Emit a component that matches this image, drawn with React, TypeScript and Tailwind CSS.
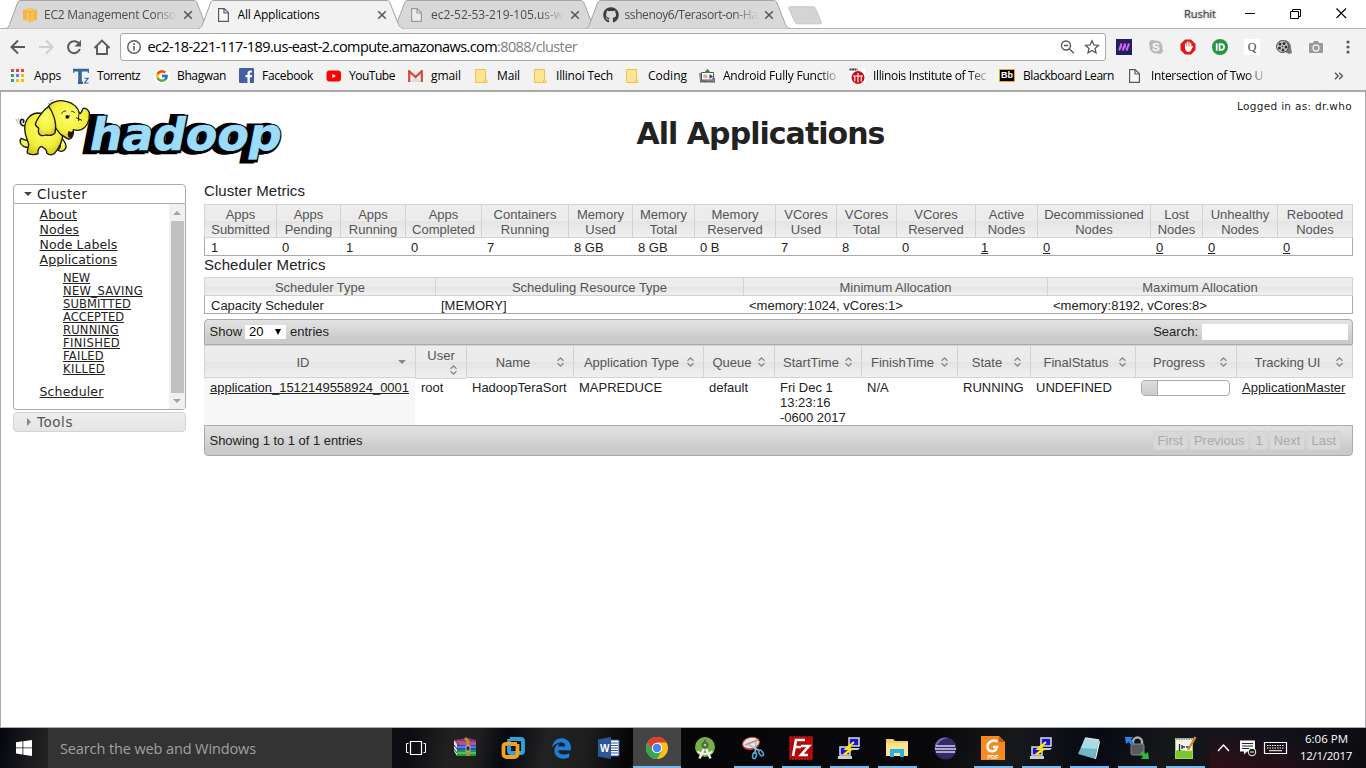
import { useLayoutEffect, useRef, useState } from "react";
import type { ReactNode } from "react";
import { FaGithub, FaSkype } from "react-icons/fa";
import { FaEdgeLegacy } from "react-icons/fa6";
import { FcGoogle } from "react-icons/fc";

/* One line of text whose letter spacing is adjusted so that it takes w pixels. */
function Fit({ w, children, className = "" }: { w: number; children: string; className?: string }) {
  const ref = useRef<HTMLSpanElement>(null);
  const [spacing, setSpacing] = useState(0);
  useLayoutEffect(() => {
    if (ref.current) {
      setSpacing((w - ref.current.getBoundingClientRect().width) / children.length);
    }
  }, [w, children]);
  return (
    <span ref={ref} className={`inline-block whitespace-pre shrink-0 ${className}`} style={{ letterSpacing: spacing }}>
      {children}
    </span>
  );
}

/* ---------- small icons ---------- */
const PageIcon = ({ color = "#5a5a5a" }: { color?: string }) => (
  <svg width="16" height="16" viewBox="0 0 16 16" fill="#fff" fillOpacity=".5" stroke={color} strokeWidth="1.2">
    <path d="M2.6 1.6h5.6l4.2 4.2v8.6H2.6z" />
    <path d="M8 1.6v4.4h4.4" fill="none" />
  </svg>
);
const Cube = () => (
  <svg width="16" height="16" viewBox="0 0 16 16">
    <path d="M1 3l5-1v12l-5-1.500z" fill="#f5b44a" />
    <path d="M15 3l-5-1v12l5-1.500z" fill="#f5b44a" />
    <path d="M4.500 1.600L8 .8l3.500.8V14.500L8 15.400l-3.500-.9z" fill="#f9c35e" />
    <path d="M4.500 4.500L8 5.200l3.500-.7M8 5v10" stroke="#e0a038" strokeWidth=".7" fill="none" />
  </svg>
);
const CloseX = () => (
  <svg width="10" height="10" viewBox="0 0 10 10" stroke="#5a5a5a" strokeWidth="1.6">
    <path d="M1.200 1.200l7.600 7.600M8.800 1.200L1.200 8.800" />
  </svg>
);
const AppsGrid = () => (
  <svg width="14" height="14" viewBox="0 0 14 14">
    {["#ea4335", "#ea4335", "#ea4335", "#34a853", "#4285f4", "#fbbc05", "#34a853", "#fbbc05", "#fbbc05"].map((c, i) => (
      <rect key={i} x={(i % 3) * 5} y={Math.floor(i / 3) * 5} width="3" height="3" fill={c} />
    ))}
  </svg>
);
const TorrentzIcon = () => (
  <svg width="16" height="16" viewBox="0 0 16 16" fill="none" stroke="#336699">
    <path d="M0 2.200h16M5 14.800h5" strokeWidth="2.800" />
    <path d="M.7 2v3M15.300 2v3" strokeWidth="1" />
    <path d="M7 1v14" strokeWidth="3.600" />
    <path d="M11.500 10.200h3.800l-3.800 4.800h4" strokeWidth="1.100" />
  </svg>
);
const GoogleTile = () => (
  <span className="flex size-4 items-center justify-center rounded-full bg-white">
    <FcGoogle size={14} />
  </span>
);
const FacebookTile = () => (
  <svg width="15" height="15" viewBox="0 0 15 15">
    <rect width="15" height="15" rx="1" fill="#4460a0" />
    <path d="M8.500 15V9.300H6.500V7H8.500V5.400C8.500 3.300 9.700 2.400 11.400 2.400c.8 0 1.400.05 1.600.1v2h-1.100c-.9 0-1.100.45-1.100 1.100V7h2.200l-.3 2.300h-1.900V15z" fill="#fff" />
  </svg>
);
const YoutubeTile = () => (
  <svg width="16" height="16" viewBox="0 0 16 16">
    <rect x=".5" y="2.500" width="14.500" height="11" rx="3" fill="#f00" />
    <path d="M6.300 5.800v4.400L10 8z" fill="#fff" />
  </svg>
);
const GmailTile = () => (
  <svg width="15" height="12" viewBox="0 0 15 12">
    <rect width="15" height="12" rx="1" fill="#f1f1f1" />
    <path d="M2 12L7.500 6.500 13 12" fill="#dcdcdc" />
    <path d="M1.200 12V1.200L7.500 7l6.300-5.800V12" fill="none" stroke="#d6473a" strokeWidth="2.200" />
  </svg>
);
const Folder = () => (
  <svg width="13" height="14" viewBox="0 0 13 14">
    <path d="M.5.5h10v10l1.500 1v2H.5z" fill="#ffe593" stroke="#edc34d" />
    <path d="M9.500 13.500v-2.500h2" fill="none" stroke="#edc34d" />
  </svg>
);
const AndroidTile = () => (
  <svg width="16" height="14" viewBox="0 0 16 14">
    <path d="M0 4h3v7h3v2H1z" fill="#8a8a8a" />
    <path d="M2.500 3.500h12V11h-12z" fill="#fff" stroke="#555" />
    <path d="M6 2.500L8.500 0 11 2.500v1.500H6z" fill="#3d8048" />
    <rect x="4.500" y="5.500" width="4" height="3.500" fill="#e8a0a0" />
    <path d="M10.500 5l3.500 2.500-3.500 2.500z" fill="#2d3c78" />
    <path d="M1 12.500h15" stroke="#666" strokeWidth="2" />
    <path d="M13 9.500h2.500v4" stroke="#777" strokeWidth="1.500" fill="none" />
  </svg>
);
const IitTile = () => (
  <svg width="16" height="16" viewBox="0 0 16 16">
    <rect width="16" height="16" fill="#fff" />
    <circle cx="9" cy="9.500" r="6.500" fill="#c60c12" />
    <path d="M.5 1.500h8" stroke="#333" strokeWidth="1.800" strokeDasharray="2 .5" />
    <path d="M5.800 13.500V8M9 14.500V5M12.200 13.500V8M4 8h10" stroke="#fff" strokeWidth="1.100" />
  </svg>
);
const BbTile = () => (
  <span className="flex h-[13px] w-4 items-center justify-center border border-[#e8a912] bg-black font-['Liberation_Sans'] text-[9px] font-bold leading-none text-white">
    Bb
  </span>
);

/* ---------- browser chrome ---------- */
type TabInfo = { icon: ReactNode; title: string; w: number; active?: boolean };
const tabs: TabInfo[] = [
  { icon: <Cube />, title: "EC2 Management Conso", w: 132 },
  { icon: <PageIcon />, title: "All Applications", w: 82, active: true },
  { icon: <PageIcon color="#9a9a9a" />, title: "ec2-52-53-219-105.us-w", w: 132 },
  { icon: <FaGithub size={16} color="#3c3c3c" />, title: "sshenoy6/Terasort-on-Ha", w: 133 },
];

function Tab({ icon, title, w, active }: TabInfo) {
  return (
    <div className={`relative -ml-[10.5px] h-[29px] w-[204px] shrink-0 ${active ? "z-10" : ""}`}>
      <svg className="absolute inset-0" width="204" height="29" viewBox="0 0 204 29">
        <path
          d="M0 28.500C2 28 2.500 27 3.500 24.500L11.500 3C12.300 1 13 .5 15 .5H187C189 .5 190.200 1 191 3L199.500 24.500C200.500 27 202 28 204 28.500"
          fill={active ? "#f2f2f2" : "#d8d8d8"}
          stroke="#a3a3a3"
        />
        {active && <path d="M1 28.500h202" stroke="#f2f2f2" strokeWidth="1.400" />}
      </svg>
      <div className="relative flex h-[29px] items-center pl-[16.500px]">
        <span className="flex w-[22px] shrink-0">{icon}</span>
        <div className={`w-[136px] overflow-hidden text-[12px] leading-4 ${active ? "text-black" : "text-[#4c4c4c] [mask-image:linear-gradient(to_right,black_80%,transparent_98%)]"}`}>
          <Fit w={w}>{title}</Fit>
        </div>
        <span className="ml-[3px]">
          <CloseX />
        </span>
      </div>
    </div>
  );
}

type Mark = { icon: ReactNode; text: string; tw: number; w: string; off: string; fade?: boolean };
const marks: Mark[] = [
  { icon: <AppsGrid />, text: "Apps", tw: 27, w: "w-[62px]", off: "w-[23px]" },
  { icon: <TorrentzIcon />, text: "Torrentz", tw: 43, w: "w-[81px]", off: "w-6" },
  { icon: <GoogleTile />, text: "Bhagwan", tw: 49, w: "w-[85px]", off: "w-[23px]" },
  { icon: <FacebookTile />, text: "Facebook", tw: 51, w: "w-[87px]", off: "w-[23px]" },
  { icon: <YoutubeTile />, text: "YouTube", tw: 46, w: "w-[82px]", off: "w-[23px]" },
  { icon: <GmailTile />, text: "gmail", tw: 30, w: "w-[67px]", off: "w-[23px]" },
  { icon: <Folder />, text: "Mail", tw: 23, w: "w-[59px]", off: "w-[22px]" },
  { icon: <Folder />, text: "Illinoi Tech", tw: 57, w: "w-[92px]", off: "w-[22px]" },
  { icon: <Folder />, text: "Coding", tw: 39, w: "w-[73px]", off: "w-[22px]" },
  { icon: <AndroidTile />, text: "Android Fully Functio", tw: 113, w: "w-[150px]", off: "w-6", fade: true },
  { icon: <IitTile />, text: "Illinois Institute of Tec", tw: 113, w: "w-[150px]", off: "w-6", fade: true },
  { icon: <BbTile />, text: "Blackboard Learn", tw: 91, w: "w-[128px]", off: "w-6" },
  { icon: <PageIcon />, text: "Intersection of Two U", tw: 112, w: "w-[207px]", off: "w-6", fade: true },
];

function BookmarkItem({ icon, text, tw, w, off, fade }: Mark) {
  return (
    <div className={`flex shrink-0 items-center ${w}`}>
      <span className={`flex shrink-0 ${off}`}>{icon}</span>
      <Fit w={tw} className={`text-[12px] leading-4 text-black ${fade ? "[mask-image:linear-gradient(to_right,black_85%,transparent_105%)]" : ""}`}>
        {text}
      </Fit>
    </div>
  );
}

function Chrome() {
  return (
    <header className="h-[91px] bg-white font-['Open_Sans','Noto_Sans',sans-serif]">
      <div className="flex h-[29px] items-start border-b border-[#b4b4b4]">
        <div className="-mb-px flex h-[29px] w-[790px] shrink-0 pl-4">
          {tabs.map((t) => (
            <Tab key={t.title} {...t} />
          ))}
        </div>
        <svg className="mt-[6px] -ml-[3px] shrink-0" width="37" height="19" viewBox="0 0 37 19">
          <path d="M3.500.8h22c2 0 2.600.5 3.300 2.200l5.500 13c.5 1.400 0 1.800-1.500 1.800h-22c-1.500 0-2.400-.6-3-2L2 2.800c-.5-1.300 0-2 1.500-2z" fill="#d4d4d4" stroke="#c6c6c6" />
        </svg>
        <div className="ml-auto flex h-[27px] items-center pr-[19px]">
          <Fit w={32} className="text-[11px] leading-none text-[#444] [text-shadow:0_0_2px_#777]">Rushit</Fit>
          <svg className="ml-[29px]" width="102" height="12" viewBox="0 0 102 12" fill="none" stroke="#000">
            <path d="M0 5.500h10M45.500 3.500h8v7h-8zM47.500 3.500v-2h8v7h-2" />
            <path d="M91.500 .5l9.500 9.500M101 .5l-9.500 9.500" strokeWidth="1.100" />
          </svg>
        </div>
      </div>
      <div className="flex h-[36px] items-center bg-[#f2f2f2]">
        <svg className="shrink-0" width="120" height="36" viewBox="0 0 120 36" fill="none" stroke="#5a5a5a" strokeWidth="2">
          <path d="M25 18H12M18 11.500L11.500 18l6.500 6.500" />
          <path d="M39 18h13M46 11.500l6.500 6.500-6.500 6.500" stroke="#cfcfcf" />
          <path d="M79.300 15.200A6 6 0 1 0 79.800 20" />
          <path d="M81 11v6.500h-6.500z" fill="#5a5a5a" stroke="none" />
          <path d="M94.500 19L102 11.500l7.500 7.500M97 17.500v7.500h10v-7.500" strokeWidth="1.900" />
        </svg>
        <div className="flex h-[28px] w-[986px] items-center rounded-[3px] border border-[#a9a9a9] bg-white pl-[5px] pr-[5px]">
          <svg width="16" height="16" viewBox="0 0 16 16" fill="none" stroke="#5a5a5a" strokeWidth="1.400">
            <circle cx="8" cy="8" r="6.300" />
            <path d="M8 7v4.500M8 4.300v1.600" strokeWidth="1.600" />
          </svg>
          <div className="ml-[5.500px] flex text-[14.500px] leading-5">
            <Fit w={349.500} className="text-black">ec2-18-221-117-189.us-east-2.compute.amazonaws.com</Fit>
            <Fit w={80} className="text-[#808080]">:8088/cluster</Fit>
          </div>
          <svg className="ml-auto" width="40" height="16" viewBox="0 0 40 16" fill="none" stroke="#5a5a5a" strokeWidth="1.400">
            <circle cx="6" cy="6.500" r="4.500" />
            <path d="M4 6.500h4M9.300 9.800l4.500 4.500" />
            <path d="M32 1.800l1.900 4.200 4.500.4-3.400 3 1 4.500-4-2.400-4 2.400 1-4.500-3.400-3 4.500-.4z" strokeWidth="1.300" />
          </svg>
        </div>
        <div className="flex flex-1 items-center pl-[10px]">
          <span className="flex w-8 shrink-0">
            <svg width="16" height="16" viewBox="0 0 16 16">
              <rect width="16" height="16" fill="#20205f" />
              <path d="M5.500 4.500L3.200 11.500M9.200 4.500L6.800 11.500M13 4.500l-2.400 7" stroke="#e85cf2" strokeWidth="2.100" />
              <path d="M5 4.500L6.800 11.500M8.800 4.500l1.800 7" stroke="#b765f3" strokeWidth="1" />
            </svg>
          </span>
          <span className="flex w-8 shrink-0"><FaSkype size={16} color="#b9b9b9" /></span>
          <span className="flex w-8 shrink-0">
            <svg width="16" height="16" viewBox="0 0 16 16">
              <path d="M5 .5h6l4.500 4.500v6L11 15.500H5L.5 11V5z" fill="#e01818" />
              <path d="M5.600 9V5M7.300 8V3.200M9 8V3.200M10.700 9V4.600" stroke="#fff" strokeWidth="1.300" strokeLinecap="round" />
              <path d="M5 7.500h6.300l1.300-.8c.5.300.3 1-.1 1.600-1 1.800-1.400 4.700-3.800 4.700C6 13 5 11 5 7.500z" fill="#fff" />
            </svg>
          </span>
          <span className="flex w-8 shrink-0">
            <svg width="16" height="16" viewBox="0 0 16 16">
              <circle cx="8" cy="8" r="8" fill="#25953f" />
              <path d="M4.700 4.300v7.400" stroke="#fff" strokeWidth="1.800" />
              <path d="M7.600 5.200h1.600a2.800 2.800 0 0 1 0 5.600H7.600z" stroke="#fff" strokeWidth="1.800" fill="none" />
            </svg>
          </span>
          <span className="mr-4 flex size-4 shrink-0 items-center justify-center bg-white font-['Liberation_Serif'] text-[12px] leading-none text-[#444]">Q</span>
          <span className="flex w-8 shrink-0">
            <svg width="16" height="16" viewBox="0 0 16 16">
              <path d="M9 1c4 1 6 4 6 8l1 5-3 1-4-2z" fill="#777" />
              <circle cx="6.500" cy="7.500" r="6" fill="#c8c8c8" stroke="#4a4a4a" strokeWidth="1" />
              {[[4, 5], [8, 4.500], [10, 8], [3.500, 9], [7, 11]].map(([x, y]) => (
                <circle key={x} cx={x} cy={y} r="1.500" fill="#333" />
              ))}
              <circle cx="6.500" cy="7.500" r=".8" fill="#333" />
            </svg>
          </span>
          <span className="flex w-8 shrink-0">
            <svg width="16" height="16" viewBox="0 0 16 16">
              <path d="M2 4h3l1-2h4l1 2h3a1 1 0 0 1 1 1v8a1 1 0 0 1-1 1H2a1 1 0 0 1-1-1V5a1 1 0 0 1 1-1z" fill="#999" />
              <circle cx="8" cy="9" r="3" fill="#999" stroke="#eee" strokeWidth="1.400" />
            </svg>
          </span>
          <svg className="ml-[6px] shrink-0" width="4" height="14" viewBox="0 0 4 14" fill="#5a5a5a">
            <circle cx="2" cy="2" r="1.600" />
            <circle cx="2" cy="7" r="1.600" />
            <circle cx="2" cy="12" r="1.600" />
          </svg>
        </div>
      </div>
      <div className="flex h-[26px] items-center border-b border-[#a8a8a8] bg-[#f2f2f2] pb-[4px] pl-[11px]">
        {marks.map((m) => (
          <BookmarkItem key={m.text} {...m} />
        ))}
        <svg className="mt-px shrink-0" width="10" height="8" viewBox="0 0 10 8" fill="none" stroke="#555" strokeWidth="1.400">
          <path d="M1 .8L4.200 4 1 7.200M5.200.8L8.400 4 5.200 7.200" />
        </svg>
      </div>
    </header>
  );
}

/* ---------- Hadoop page ---------- */
function Logo() {
  return (
    <svg className="mt-[4px] ml-[12px] shrink-0 overflow-visible" width="273" height="68" viewBox="39 15 819 204">
      <defs>
        <radialGradient id="skin" cx=".5" cy=".4" r=".7">
          <stop offset="0" stopColor="#ffff70" />
          <stop offset=".6" stopColor="#f3ee3c" />
          <stop offset="1" stopColor="#c9be1a" />
        </radialGradient>
      </defs>
      <g transform="translate(257 180) skewX(-11)" fontFamily="DejaVu Sans" fontWeight="bold" fontSize="134" strokeLinejoin="miter">
        <text x="-10" y="0" textLength="574" lengthAdjust="spacingAndGlyphs" fill="#000" stroke="#000" strokeWidth="19">hadoop</text>
        <text x="2" y="-1" textLength="576" lengthAdjust="spacingAndGlyphs" fill="#000" stroke="#000" strokeWidth="14">hadoop</text>
        <text x="5" y="-2" textLength="575" lengthAdjust="spacingAndGlyphs" fill="#9bdcfb" stroke="#9bdcfb" strokeWidth="2">hadoop</text>
      </g>
      <g fill="url(#skin)" stroke="#1a1a0a" strokeWidth="4" strokeLinejoin="round" strokeLinecap="round">
        <path d="M76 104C66 106 58 98 62 88C66 82 74 86 70 94" fill="none" strokeWidth="5" />
        <path d="M90 152C82 148 72 148 64 142C56 150 62 162 72 167C84 172 92 168 96 160Z" />
        <path d="M178 148C184 160 182 170 174 178C182 184 194 180 197 172C202 160 192 150 186 142Z" />
        <path d="M112 66C90 68 74 88 74 112C74 136 84 148 86 160C86 170 80 178 82 186C90 192 108 192 114 188C112 176 116 170 124 166C132 170 142 176 140 186C150 196 164 190 166 184C176 172 184 156 188 138L160 70Z" />
        <path d="M146 44C158 30 180 26 198 31C218 34 236 50 238 68C246 68 246 54 250 52C258 50 270 60 268 70C270 92 258 110 244 116C232 120 226 118 220 116C222 130 216 146 206 144C196 142 192 134 182 130L158 100Z" />
        <path d="M146 46C128 58 108 88 106 100C108 108 114 108 116 112C112 130 122 138 138 132C152 136 168 130 166 118C170 96 160 64 146 46Z" />
      </g>
      <path d="M206 120C212 124 218 122 222 116C222 130 216 142 207 140C202 134 202 128 206 120Z" fill="#26150c" />
      <path d="M198 74c4 2 8 3 12 0M236 70v20M228 80l18 8M184 68c4-6 8-8 14-8M214 62c4-2 8 0 10 4" stroke="#222" strokeWidth="3" fill="none" />
      <ellipse cx="202" cy="78" rx="6" ry="5" fill="#111" />
      <path d="M48 84c2 8 4 10 8 14M56 82c-2 6 0 8 2 10M148 30c4-3 8-4 12-3M144 38l6-3" stroke="#888" strokeWidth="2" fill="none" />
    </svg>
  );
}

const navLink = "underline decoration-1 underline-offset-1";
function Sidebar() {
  const states: [string, number][] = [
    ["NEW", 27], ["NEW_SAVING", 80], ["SUBMITTED", 68], ["ACCEPTED", 61],
    ["RUNNING", 56], ["FINISHED", 57], ["FAILED", 41], ["KILLED", 42],
  ];
  const links: [string, number][] = [["About", 37.500], ["Nodes", 39.500], ["Node Labels", 78], ["Applications", 77.500]];
  return (
    <nav className="w-[173px] shrink-0 font-['DejaVu_Sans',sans-serif] text-[#222]">
      <div className="flex h-[20px] items-center rounded-t-[4px] border border-[#aaa] bg-white pl-[10px]">
        <span className="mr-[5px] border-x-[4px] border-t-[4px] border-x-transparent border-t-[#454545]" />
        <Fit w={50} className="pt-[2px] text-[13.500px] leading-none">Cluster</Fit>
      </div>
      <div className="flex h-[206px] rounded-b-[4px] border border-t-0 border-[#aaa] bg-white">
        <div className="flex-1 pl-[25.500px] pt-[3px]">
          <ul className="text-[12.500px] leading-[15px]">
            {links.map(([t, w]) => (
              <li key={t} className="h-[15px]"><Fit w={w} className={navLink}>{t}</Fit></li>
            ))}
          </ul>
          <ul className="ml-[23.500px] mt-[5px] text-[11.500px] leading-[13px]">
            {states.map(([t, w]) => (
              <li key={t} className="h-[13px]"><Fit w={w} className={navLink}>{t}</Fit></li>
            ))}
          </ul>
          <div className="mt-[8px] text-[12.500px] leading-[15px]"><Fit w={64} className={navLink}>Scheduler</Fit></div>
        </div>
        <div className="flex w-[16px] flex-col items-center bg-[#f1f1f1]">
          <span className="mt-[7px] border-x-[4px] border-b-[4px] border-x-transparent border-b-[#a3a3a3]" />
          <span className="mt-[6px] h-[172px] w-[13px] bg-[#c1c1c1]" />
          <span className="mt-[6px] border-x-[4px] border-t-[4px] border-x-transparent border-t-[#a3a3a3]" />
        </div>
      </div>
      <div className="mt-[2px] flex h-[20px] items-center rounded-[4px] border border-[#d3d3d3] bg-linear-to-b from-[#ededed] to-[#e6e6e6] pl-[13px] text-[#555]">
        <span className="mr-[6px] border-y-[4px] border-l-[4px] border-y-transparent border-l-[#888]" />
        <Fit w={36} className="pt-[2px] text-[13.500px] leading-none">Tools</Fit>
      </div>
    </nav>
  );
}

const gloss = "bg-[linear-gradient(#ededed_0%,#ebebeb_50%,#e4e4e4_51%,#f0f0f0_100%)]";
const headCell = `${gloss} border-l border-y border-[#d3d3d3] last:border-r text-[#555]`;
const bar = "border border-[#aaa] bg-[linear-gradient(#e2e2e2,#d6d6d6_45%,#cbcbcb_75%,#cbcbcb)]";

const metrics: [string, string, string, boolean?][] = [
  ["Apps", "Submitted", "1"], ["Apps", "Pending", "0"], ["Apps", "Running", "1"], ["Apps", "Completed", "0"],
  ["Containers", "Running", "7"], ["Memory", "Used", "8 GB"], ["Memory", "Total", "8 GB"], ["Memory", "Reserved", "0 B"],
  ["VCores", "Used", "7"], ["VCores", "Total", "8"], ["VCores", "Reserved", "0"], ["Active", "Nodes", "1", true],
  ["Decommissioned", "Nodes", "0", true], ["Lost", "Nodes", "0", true], ["Unhealthy", "Nodes", "0", true], ["Rebooted", "Nodes", "0", true],
];
const scheduler = [
  ["Scheduler Type", "Capacity Scheduler"],
  ["Scheduling Resource Type", "[MEMORY]"],
  ["Minimum Allocation", "<memory:1024, vCores:1>"],
  ["Maximum Allocation", "<memory:8192, vCores:8>"],
];
const metricCols = "grid grid-cols-[72px_64px_65px_76px_87px_64px_62px_81px_61px_60px_79px_62px_113px_52px_75px_76px]";
const schedCols = "grid grid-cols-[231px_308px_304px_306px]";
const appCols = "grid grid-cols-[211px_51px_107px_130px_71px_87px_96px_73px_105px_101px_117px]";

const SortIcon = () => (
  <svg width="9" height="10" viewBox="0 0 9 10" fill="none" stroke="#888" strokeWidth="1.300">
    <path d="M1.500 3.800L4.500 1l3 2.800M1.500 6.200l3 2.800 3-2.800" />
  </svg>
);

function Main() {
  const heads = ["ID", "User", "Name", "Application Type", "Queue", "StartTime", "FinishTime", "State", "FinalStatus", "Progress", "Tracking UI"];
  return (
    <main className="w-[1149px] shrink-0 text-[13px] leading-[15px] text-[#222]">
      <h2 className="h-[20px] text-[15px] leading-[14px]"><Fit w={101}>Cluster Metrics</Fit></h2>
      <div className={metricCols}>
        {metrics.map(([a, b], i) => (
          <div key={i} className={`${headCell} h-[34px] whitespace-nowrap pt-[2px] text-center`}>
            {a}<br />{b}
          </div>
        ))}
      </div>
      <div className={`${metricCols} h-[18px] border-x border-b border-[#aaa]`}>
        {metrics.map(([, , v, link], i) => (
          <div key={i} className="pl-[5px] pt-[2px] first:pl-[6px]"><span className={link ? "underline" : ""}>{v}</span></div>
        ))}
      </div>
      <h2 className="h-[21px] pt-px text-[15px] leading-[15px]"><Fit w={121.500}>Scheduler Metrics</Fit></h2>
      <div className={schedCols}>
        {scheduler.map(([h]) => (
          <div key={h} className={`${headCell} h-[19px] pt-[2px] text-center`}>{h}</div>
        ))}
      </div>
      <div className={`${schedCols} h-[18px] border-x border-b border-[#aaa]`}>
        {scheduler.map(([, v]) => (
          <div key={v} className="pl-[5px] pt-[2px] first:pl-[6px]">{v}</div>
        ))}
      </div>
      <div className={`${bar} mt-[5px] flex h-[26px] items-center rounded-t-[4px] pb-px pl-[4.500px] pr-[4px]`}>
        <span>Show</span>
        <span className="ml-[3px] flex h-[14px] w-[41px] items-center justify-between bg-white pl-[4px] pr-[5px] text-black">
          <span>20</span>
          <span className="border-x-[3.500px] border-t-[6px] border-x-transparent border-t-black" />
        </span>
        <span className="ml-[4px]">entries</span>
        <span className="ml-auto">Search:</span>
        <input className="ml-[4px] h-[16px] w-[146px] bg-white" />
      </div>
      <div className={`${appCols} h-[32px]`}>
        {heads.map((h) =>
          h === "User" ? (
            <div key={h} className={`${headCell} flex h-[34px] flex-col pt-[2px] pr-[8px]`}>
              <span className="pl-[8px] text-center">{h}</span>
              <span className="flex justify-end pt-[2px]"><SortIcon /></span>
            </div>
          ) : (
            <div key={h} className={`${headCell} flex h-[33px] items-center pl-[3px] pr-[8px] pt-px`}>
              <span className="flex-1 whitespace-nowrap text-center">{h}</span>
              {h === "ID" ? (
                <span className="mr-px border-x-[4px] border-t-[4px] border-x-transparent border-t-[#888]" />
              ) : (
                <SortIcon />
              )}
            </div>
          ),
        )}
      </div>
      <div className={`${appCols} h-[48px] *:pl-[6px] *:pt-[3px]`}>
        <div className="bg-[linear-gradient(#d3d3d3_1px,#f7f7f7_1px)]"><Fit w={199} className="underline">application_1512149558924_0001</Fit></div>
        <div>root</div>
        <div>HadoopTeraSort</div>
        <div>MAPREDUCE</div>
        <div>default</div>
        <div>Fri Dec 1<br />13:23:16<br />-0600 2017</div>
        <div>N/A</div>
        <div>RUNNING</div>
        <div>UNDEFINED</div>
        <div>
          <div className="h-[16px] w-[89px] overflow-hidden rounded-[4px] border border-[#aaa] bg-white">
            <div className="h-full w-[16px] border-r border-[#aaa] bg-linear-to-b from-[#dcdcdc] to-[#cccccc]" />
          </div>
        </div>
        <div><span className="underline">ApplicationMaster</span></div>
      </div>
      <div className={`${bar} flex h-[31px] items-center rounded-b-[4px] pl-[4.500px] pr-[11px]`}>
        <Fit w={153}>Showing 1 to 1 of 1 entries</Fit>
        <div className="ml-auto flex h-[19px] gap-px text-[#aaa] *:flex *:items-center *:rounded-[2px] *:border *:border-[#d2d2d2] *:bg-[#d8d8d8] *:px-[4px]">
          <span>First</span><span>Previous</span><span>1</span><span>Next</span><span>Last</span>
        </div>
      </div>
    </main>
  );
}

/* ---------- taskbar ---------- */
const Rar = () => (
  <svg width="24" height="24" viewBox="0 0 24 24">
    <path d="M1 4l14-2 8 2v5H3z" fill="#8a3a6a" /><path d="M3 5l4 4h16V6z" fill="#b9528f" />
    <path d="M3 9h20v5H3z" fill="#2a50c0" /><path d="M3 11h20" stroke="#86a5ff" />
    <path d="M3 14h20v6H4z" fill="#1c9a38" /><path d="M4 17h19" stroke="#8be08b" />
    <path d="M1 4l3 4v12l-3-5z" fill="#ddd" />
    <path d="M1 9l3 4M1 13l3 4" stroke="#444" />
    <path d="M12 2l3 3v15" stroke="#c38a2c" strokeWidth="3" fill="none" /><rect x="13" y="10" width="4" height="5" fill="#333" stroke="#ddd" strokeWidth=".7" />
  </svg>
);
const VmWare = () => (
  <svg width="24" height="24" viewBox="0 0 24 24" fill="none" strokeWidth="3.800" strokeLinejoin="round">
    <path d="M9 3h11a2 2 0 0 1 2 2v10a2 2 0 0 1-2 2H10a2 2 0 0 1-2-2V3" stroke="#31a2dd" />
    <path d="M16 8H5a2 2 0 0 0-2.500 2v8a3 3 0 0 0 3 3h8a3 3 0 0 0 3-3V8" stroke="#f6a11c" />
    <path d="M8 9V15a2 2 0 0 0 2 2h4" stroke="#31a2dd" strokeWidth="3" />
  </svg>
);
const Word = () => (
  <svg width="22" height="22" viewBox="0 0 22 22">
    <path d="M12 3h9v16h-9z" fill="#fff" stroke="#2b579a" />
    <path d="M13 6h7M13 8.500h7M13 11h7M13 13.500h7M13 16h7" stroke="#2b579a" />
    <path d="M0 2.500L13 0v22L0 19.500z" fill="#2b579a" />
    <text x="2" y="14.500" fill="#fff" fontSize="10" fontWeight="bold" fontFamily="Liberation Sans">W</text>
  </svg>
);
const ChromeLogo = () => (
  <svg width="22" height="22" viewBox="0 0 22 22">
    <circle cx="11" cy="11" r="11" fill="#fbc116" />
    <path d="M1.500 5.500A11 11 0 0 1 20.500 5.500H11L6.200 13.700z" fill="#e33b2e" />
    <path d="M1.500 5.500A11 11 0 0 0 11 22L15.800 13.700H6.200z" fill="#2da94f" />
    <circle cx="11" cy="11" r="5.200" fill="#fff" /><circle cx="11" cy="11" r="4.200" fill="#4285f4" />
  </svg>
);
const Studio = () => (
  <svg width="22" height="24" viewBox="0 0 22 24">
    <circle cx="11" cy="11" r="10" fill="#77b043" />
    <circle cx="11" cy="9" r="3.600" fill="#566b4c" /><circle cx="11" cy="9" r="1.300" fill="#b5c8a0" /><path d="M11 3.500v3" stroke="#566b4c" strokeWidth="2" />
    <path d="M9.800 13L5.500 22.500M12.200 13l4.300 9.500" stroke="#f1f1f1" strokeWidth="2.400" />
    <path d="M3.500 15.500c4 3.300 11 3.300 15 0" stroke="#f1f1f1" strokeWidth="1.800" fill="none" />
  </svg>
);
const Snip = () => (
  <svg width="24" height="24" viewBox="0 0 24 24" fill="none">
    <ellipse cx="10" cy="8.500" rx="8.500" ry="5.500" fill="#b62a2a" transform="rotate(-12 10 8.500)" />
    <ellipse cx="10" cy="7" rx="8.500" ry="5.500" fill="#e6e6e6" stroke="#c44" transform="rotate(-12 10 7)" />
    <path d="M4 9l13-5" stroke="#b88" strokeWidth="1.500" />
    <path d="M6 8l13 7M15 6l-1 12" stroke="#a9bcc6" strokeWidth="1.500" />
    <ellipse cx="13.500" cy="19.500" rx="1.800" ry="3.200" stroke="#4fa8d8" strokeWidth="1.500" transform="rotate(15 13.500 19.500)" />
    <ellipse cx="20" cy="17" rx="1.800" ry="3.200" stroke="#4fa8d8" strokeWidth="1.500" transform="rotate(-35 20 17)" />
  </svg>
);
const Zilla = () => (
  <svg width="24" height="24" viewBox="0 0 24 24">
    <rect x=".8" y=".8" width="22.400" height="22.400" fill="#b50707" stroke="#d22" strokeDasharray="2 1" />
    <path d="M4 20L7 4h9M6 11h6M12 10h8l-8 9h7" stroke="#fff" strokeWidth="2.600" fill="none" />
  </svg>
);
const Putty = () => (
  <svg width="23" height="23" viewBox="0 0 23 23">
    <rect x="11" y="1" width="10" height="8" fill="#1515d8" stroke="#ddd" strokeWidth="1.500" /><path d="M10 11h12l-2 2h-10z" fill="#ccc" />
    <rect x="2" y="10" width="10" height="8" fill="#1515d8" stroke="#ddd" strokeWidth="1.500" /><path d="M0 19h14v3H0z" fill="#ccc" />
    <path d="M16 5l-8 7 5 .5-7 5" stroke="#ffe800" strokeWidth="2.200" fill="none" />
  </svg>
);
const Explorer = () => (
  <svg width="22" height="20" viewBox="0 0 22 20">
    <path d="M0 1h7l2 2h13v15H0z" fill="#f7cf62" /><path d="M0 5h22v13H0z" fill="#ffe48f" />
    <path d="M4 19v-8h14v8h-4v-4H8v4z" fill="#23b2e8" />
  </svg>
);
const Eclipse = () => (
  <svg width="23" height="23" viewBox="0 0 23 23">
    <circle cx="11.500" cy="11.500" r="11" fill="#322a66" /><path d="M1 8a11 11 0 0 1 14-7A15 15 0 0 0 1 14z" fill="#7167a8" />
    <path d="M2 9h19M1 12h21M2 15h19" stroke="#d5d2ea" strokeWidth="1.300" />
  </svg>
);
const Foxit = () => (
  <svg width="24" height="24" viewBox="0 0 24 24">
    <path d="M0 0h18l6 6v18H0z" fill="#f58a1f" /><path d="M18 0l6 6h-6z" fill="#b55a0a" />
    <path d="M16.500 5.500C12 3 6.500 6 6.500 10.500c0 3 2 4.800 4.800 4.800 2.700 0 4-1.400 4.700-4.300h-4" fill="none" stroke="#fff" strokeWidth="2.400" />
    <text x="6.500" y="22.500" fill="#fff" fontSize="5.500" fontWeight="bold" fontFamily="Liberation Sans">PDF</text>
  </svg>
);
const Notepad = () => (
  <svg width="24" height="22" viewBox="0 0 24 22">
    <path d="M8 1l14 2-4 18L1 17z" fill="#6fb6c6" /><path d="M8 1l14 2-2 9L4 11z" fill="#a9dbe4" />
    <path d="M1 17l17 4 4-18 1 2-4 17z" fill="#f3f3f3" /><path d="M8 1l14 2" stroke="#ddd" strokeWidth="1.600" />
  </svg>
);
const WinScp = () => (
  <svg width="24" height="24" viewBox="0 0 24 24">
    <path d="M8 9V6a4.500 4.500 0 0 1 9 0v3" fill="none" stroke="#aaa" strokeWidth="2.500" /><rect x="6" y="8" width="13" height="11" rx="1.500" fill="#5a5a5a" stroke="#888" />
    <path d="M0 1h8L6 3.500 9 7 6.500 9 3.500 6 1 8z" fill="#2a86e0" />
    <path d="M24 23h-8l2-2.500-3-3L17.500 15l3 3L23 16z" fill="#2fb93a" />
  </svg>
);
const NotePlus = () => (
  <svg width="23" height="24" viewBox="0 0 23 24">
    <rect x="1" y="2" width="18" height="21" fill="#f4f4ee" /><path d="M1 15c6-3 12 2 18-1v9H1z" fill="#7cc62f" />
    <path d="M1.500 2.500h17v20h-17z" fill="none" stroke="#9fce6a" />
    <path d="M2 3h16" stroke="#999" strokeWidth="2" strokeDasharray="1.500 1" /><path d="M5.500 8v7M8 11h3M12 11h3M8 9v4" stroke="#333" strokeWidth="1.300" />
    <path d="M21.500 1L14 14" stroke="#d98a2a" strokeWidth="2.400" />
  </svg>
);

type Task = { icon: ReactNode; open?: boolean; focus?: boolean };
const tasks: Task[] = [
  { icon: <Rar /> }, { icon: <VmWare /> }, { icon: <FaEdgeLegacy size={21} color="#1b80da" /> }, { icon: <Word /> },
  { icon: <ChromeLogo />, focus: true }, { icon: <Studio /> }, { icon: <Snip />, open: true }, { icon: <Zilla />, open: true },
  { icon: <Putty />, open: true }, { icon: <Explorer />, open: true }, { icon: <Eclipse /> }, { icon: <Foxit />, open: true },
  { icon: <Putty />, open: true }, { icon: <Notepad />, open: true }, { icon: <WinScp />, open: true }, { icon: <NotePlus />, open: true },
];

function Taskbar() {
  return (
    <footer className="flex h-[40px] bg-[linear-gradient(100deg,#05060c_0,#17181c_2%,#242321_4%,#0c0d12_30%,#222120_33%,#1f1f1e_35%,#05080f_37%,#222222_40%,#1d1d1d_43%,#060608_46%,#08080a_68%,#18191b_74%,#060914_80%,#161719_85%,#10121c_92%,#0c0c10_100%)] font-['Open_Sans','Noto_Sans',sans-serif]">
      <div className="flex w-12 items-center justify-center">
        <svg width="16" height="16" viewBox="0 0 16 16" fill="#fff">
          <path d="M0 2.200l6.500-.9v6.200H0zM7.300 1.200L16 0v7.500H7.300zM0 8.300h6.500v6.200L0 13.600zM7.300 8.300H16V16l-8.700-1.200z" />
        </svg>
      </div>
      <div className="flex w-[344px] items-center bg-[#333] pl-[12px] pt-[2px]">
        <Fit w={196} className="text-[14.500px] text-[#a0a0a0]">Search the web and Windows</Fit>
      </div>
      <div className="flex w-[49px] items-center justify-center pr-px">
        <svg width="22" height="16" viewBox="0 0 22 16" fill="none" stroke="#fff">
          <path d="M5.500 1.500h11v13h-11z" strokeWidth="1.200" />
          <path d="M3.500 3.500h-2v9h2M18.500 3.500h2v9h-2" />
        </svg>
      </div>
      {tasks.map((t, i) => (
        <div key={i} className={`flex w-12 shrink-0 flex-col items-center ${t.focus ? "bg-[#444]" : ""}`}>
          <span className="flex h-[38px] w-full items-center justify-center pt-[2px]">{t.icon}</span>
          {t.focus && <span className="h-[2px] w-full bg-[#76b9ed]" />}
          {t.open && <span className="h-[2px] w-[39px] bg-[#76b9ed]" />}
        </div>
      ))}
      <div className="flex flex-1 items-center bg-[radial-gradient(ellipse_at_0%_130%,#3a0d14,transparent_70%)] pl-[7px]">
        <svg width="72" height="20" viewBox="0 0 72 20" fill="none" stroke="#fff">
          <path d="M2 13l5.500-6 5.500 6" strokeWidth="1.400" />
          <path d="M24 2.500h15v11H31l-3 3v-3h-4z" fill="#fff" stroke="none" />
          <path d="M26 5.500h11M26 8h11M26 10.500h7" stroke="#222" />
          <circle cx="36" cy="14" r="3.800" fill="#161616" /><path d="M34 14h4" />
          <path d="M48.500 4.500h22v11h-22z" strokeWidth="1.200" />
          <path d="M51 7.500h17M51 10h17" strokeDasharray="1.500 1" /><path d="M53 12.700h13" />
        </svg>
        <div className="mb-[2px] ml-auto mr-[14px] flex flex-col items-end text-[11.500px] leading-[17px] text-white">
          <Fit w={43} className="mr-[4px]">6:06 PM</Fit>
          <Fit w={52}>12/1/2017</Fit>
        </div>
      </div>
    </footer>
  );
}

export default function App() {
  return (
    <div className="flex h-[768px] w-[1366px] flex-col overflow-hidden bg-white">
      <Chrome />
      <div className="flex h-[637px] flex-col border border-[#aaa] bg-white font-['Liberation_Sans',sans-serif]">
        <div className="flex h-[92px] items-start">
          <Logo />
          <h1 className="ml-[350.500px] mt-[23px] font-['DejaVu_Sans',sans-serif] text-[30px] font-bold leading-[38px] text-[#222]">
            <Fit w={248}>All Applications</Fit>
          </h1>
          <div className="ml-auto mr-[13px] mt-[6px] font-['DejaVu_Sans',sans-serif] text-[10.500px] leading-4 text-[#222]">
            <Fit w={115}>Logged in as: dr.who</Fit>
          </div>
        </div>
        <div className="flex pl-[12px]">
          <Sidebar />
          <div className="w-[18px] shrink-0" />
          <Main />
        </div>
      </div>
      <Taskbar />
    </div>
  );
}
